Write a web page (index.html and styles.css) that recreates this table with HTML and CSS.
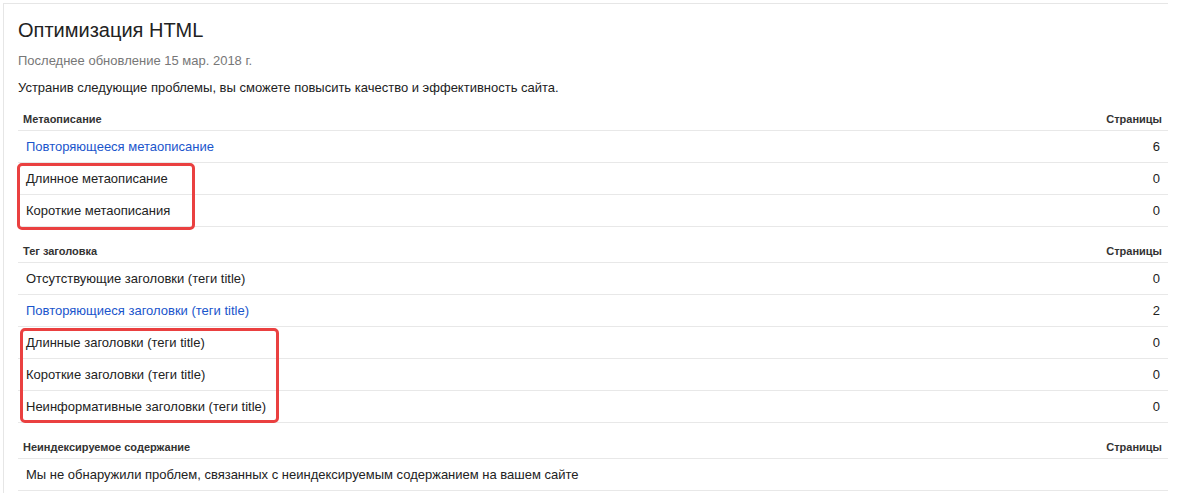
FILE: index.html
```html
<!DOCTYPE html>
<html lang="ru">
<head>
<meta charset="utf-8">
<title>Оптимизация HTML</title>
<link rel="stylesheet" href="styles.css">
</head>
<body>
<div class="card">
  <h1 class="title">Оптимизация HTML</h1>
  <div class="updated">Последнее обновление 15 мар. 2018 г.</div>
  <div class="desc">Устранив следующие проблемы, вы сможете повысить качество и эффективность сайта.</div>

  <div class="section">
    <div class="head first"><span>Метаописание</span><span class="head-r">Страницы</span></div>
    <div class="row"><a class="link" href="#">Повторяющееся метаописание</a><span class="num">6</span></div>
    <div class="row"><span>Длинное метаописание</span><span class="num">0</span></div>
    <div class="row"><span>Короткие метаописания</span><span class="num">0</span></div>
  </div>

  <div class="section">
    <div class="head"><span>Тег заголовка</span><span class="head-r">Страницы</span></div>
    <div class="row"><span>Отсутствующие заголовки (теги title)</span><span class="num">0</span></div>
    <div class="row"><a class="link" href="#">Повторяющиеся заголовки (теги title)</a><span class="num">2</span></div>
    <div class="row"><span>Длинные заголовки (теги title)</span><span class="num">0</span></div>
    <div class="row"><span>Короткие заголовки (теги title)</span><span class="num">0</span></div>
    <div class="row"><span>Неинформативные заголовки (теги title)</span><span class="num">0</span></div>
  </div>

  <div class="section">
    <div class="head"><span>Неиндексируемое содержание</span><span class="head-r">Страницы</span></div>
    <div class="row"><span>Мы не обнаружили проблем, связанных с неиндексируемым содержанием на вашем сайте</span></div>
  </div>

  <div class="mark mark-1"></div>
  <div class="mark mark-2"></div>
</div>
</body>
</html>
```

FILE: styles.css
```css
html, body {
  margin: 0;
  background: #ffffff;
}
body {
  padding: 3px 0 0 3px;
  font-family: "Liberation Sans", Arial, sans-serif;
  color: #222222;
}
.card {
  position: relative;
  width: 1165px;
  border-top: 1px solid #e6e6e6;
  border-left: 1px solid #e6e6e6;
  padding: 14px 0 0 14px;
  box-sizing: border-box;
  height: 490px;
}
.title {
  margin: 0;
  font-size: 20px;
  line-height: 24px;
  font-weight: normal;
  color: #222222;
}
.updated {
  margin-top: 11px;
  font-size: 13px;
  line-height: 16px;
  color: #777777;
}
.desc {
  margin-top: 11px;
  font-size: 13px;
  line-height: 16px;
  color: #222222;
}
.head {
  display: flex;
  justify-content: space-between;
  padding: 17px 6px 4px 5px;
  font-size: 11px;
  line-height: 14px;
  font-weight: bold;
  color: #333333;
  border-bottom: 1px solid #e8e8e8;
}
.head.first {
  padding-top: 16px;
}
.row {
  display: flex;
  justify-content: space-between;
  align-items: center;
  height: 31px;
  padding: 0 8px;
  font-size: 13px;
  border-bottom: 1px solid #e8e8e8;
}
.link {
  color: #1a55cc;
  text-decoration: none;
}
.mark {
  position: absolute;
  border: 3px solid #ea4040;
  border-radius: 5px;
  box-sizing: border-box;
}
.mark-1 {
  left: 13px;
  top: 159px;
  width: 178px;
  height: 67px;
}
.mark-2 {
  left: 16px;
  top: 324px;
  width: 259px;
  height: 95px;
}
```
